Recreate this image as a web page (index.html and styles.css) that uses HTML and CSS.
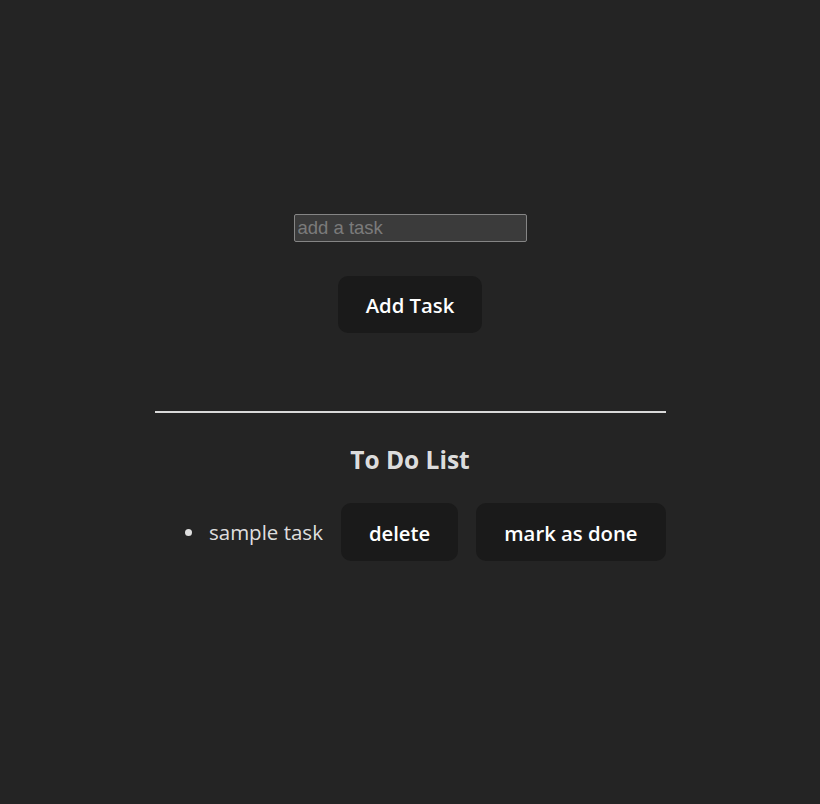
FILE: index.html
```html
<!DOCTYPE html>
<html lang="en">
<head>
<meta charset="utf-8">
<title>To Do</title>
<link rel="stylesheet" href="styles.css">
</head>
<body>
<div class="app">
  <input class="task-input" type="text" placeholder="add a task">
  <button class="btn add-btn">Add Task</button>
  <hr class="divider">
  <h2 class="title">To Do List</h2>
  <ul class="list">
    <li class="item">
      <span class="label"><span class="bullet"></span><span class="item-text">sample task</span></span>
      <button class="btn">delete</button>
      <button class="btn">mark as done</button>
    </li>
  </ul>
</div>
</body>
</html>
```
FILE: styles.css
```css
html, body {
  margin: 0;
  padding: 0;
  background: #242424;
}
body {
  font-family: "Open Sans", "Noto Sans", sans-serif;
  color: rgba(255, 255, 255, 0.87);
  min-height: 804px;
}
.app {
  width: 511px;
  margin: 0 auto;
  padding-top: 214px;
  display: flex;
  flex-direction: column;
  align-items: center;
}
.task-input {
  box-sizing: border-box;
  width: 233px;
  height: 28px;
  margin: 0;
  padding: 0 3px;
  background: #3b3b3b;
  border: 1px solid #858585;
  border-radius: 2px;
  color: #ffffff;
  font-family: "Liberation Sans", Arial, sans-serif;
  font-size: 18.5px;
  outline: none;
}
.task-input::placeholder {
  color: #7b7b7b;
}
.btn {
  box-sizing: border-box;
  height: 58px;
  padding: 1px 27px 0;
  border: 1px solid transparent;
  border-radius: 10px;
  background: #1a1a1a;
  color: #ffffff;
  font-family: inherit;
  font-size: 20.3px;
  font-weight: 600;
  cursor: pointer;
}
.add-btn {
  margin-top: 34px;
  height: 57px;
}
.divider {
  align-self: stretch;
  margin: 78px 0 0;
  border: 0;
  height: 2px;
  background: #d9d9d9;
}
.title {
  margin: 31px 0 0;
  font-size: 24.5px;
  font-weight: 700;
  line-height: 32px;
  color: rgba(255, 255, 255, 0.87);
}
.list {
  list-style: none;
  margin: 27px 0 0;
  padding: 0;
  align-self: stretch;
}
.item {
  display: flex;
  align-items: center;
  justify-content: flex-end;
  gap: 18px;
  font-size: 20.5px;
}
.label {
  display: flex;
  align-items: center;
  gap: 17px;
}
.bullet {
  width: 7px;
  height: 7px;
  border-radius: 50%;
  background: #dedede;
}
```
